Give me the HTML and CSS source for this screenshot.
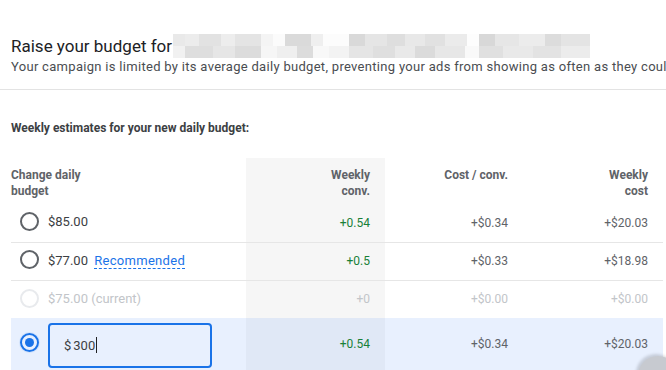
FILE: index.html
```html
<!DOCTYPE html>
<html lang="en">
<head>
  <meta charset="UTF-8" />
  <meta name="viewport" content="width=device-width, initial-scale=1.0" />
  <title>Raise your budget</title>
  <link rel="stylesheet" href="styles.css">
</head>
<body>
  <div class="dialog">
    <div class="dialog-head">
      <div class="title">
        <span>Raise your budget for</span>
        <span class="redacted"></span>
      </div>
      <p class="subtitle">Your campaign is limited by its average daily budget, preventing your ads from showing as often as they could.</p>
    </div>

    <div class="dialog-body">
      <h3 class="section-label">Weekly estimates for your new daily budget:</h3>

      <table class="estimates">
        <thead>
          <tr>
            <th class="col-budget">Change daily<br>budget</th>
            <th class="col-conv">Weekly<br>conv.</th>
            <th class="col-cost">Cost / conv.</th>
            <th class="col-weekly">Weekly<br>cost</th>
          </tr>
        </thead>
        <tbody>
          <tr>
            <td class="col-budget"><span class="radio"></span>$85.00</td>
            <td class="col-conv up">+0.54</td>
            <td class="col-cost">+$0.34</td>
            <td class="col-weekly">+$20.03</td>
          </tr>
          <tr class="divided">
            <td class="col-budget"><span class="radio"></span>$77.00 <span class="recommended">Recommended</span></td>
            <td class="col-conv up">+0.5</td>
            <td class="col-cost">+$0.33</td>
            <td class="col-weekly">+$18.98</td>
          </tr>
          <tr class="divided current">
            <td class="col-budget"><span class="radio"></span>$75.00 (current)</td>
            <td class="col-conv">+0</td>
            <td class="col-cost">+$0.00</td>
            <td class="col-weekly">+$0.00</td>
          </tr>
          <tr class="selected">
            <td class="col-budget"><span class="radio checked"></span><label class="amount-input"><span class="currency">$</span>300<span class="caret"></span></label></td>
            <td class="col-conv up">+0.54</td>
            <td class="col-cost">+$0.34</td>
            <td class="col-weekly">+$20.03</td>
          </tr>
        </tbody>
      </table>
    </div>
  </div>

  <div class="fab-edge"></div>
</body>
</html>
```

FILE: styles.css
```css
* {
  box-sizing: border-box;
  margin: 0;
  padding: 0;
}
body {
  font-family: Roboto, 'Liberation Sans', sans-serif;
  background: #fff;
  color: #3c4043;
  width: 666px;
  height: 370px;
  overflow: hidden;
  position: relative;
}
.dialog-head {
  padding: 34px 0 13px 11px;
  border-bottom: 1px solid #e3e3e3;
}
.title {
  display: flex;
  align-items: center;
  height: 24px;
  font-size: 17px;
  color: #202124;
  white-space: nowrap;
}
.redacted {
  display: inline-block;
  width: 417px;
  height: 24px;
  margin-left: 1px;
  background:
    linear-gradient(to right, #e9e9e9 0 12px, #ececec 12px 26px, #e2e2e2 26px 48px, #ededed 48px 62px, #e4e4e4 62px 88px, #f4f4f4 88px 100px, #fbfbfb 100px 112px, #dadada 112px 138px, #efefef 138px 150px, #fcfcfc 150px 176px, #d9d9d9 176px 192px, #e5e5e5 192px 214px, #dedede 214px 232px, #e8e8e8 232px 252px, #e1e1e1 252px 272px, #ebebeb 272px 294px, #fdfdfd 294px 306px, #d8d8d8 306px 322px, #e6e6e6 322px 346px, #ececec 346px 372px, #dcdcdc 372px 388px, #e4e4e4 388px 417px) top / 100% 12px no-repeat,
    linear-gradient(to right, #f1f1f1 0 12px, #dedede 12px 40px, #e6e6e6 40px 62px, #dcdcdc 62px 88px, #f6f6f6 88px 104px, #efefef 104px 124px, #dcdcdc 124px 140px, #f8f8f8 140px 156px, #f3f3f3 156px 176px, #e5e5e5 176px 200px, #dfdfdf 200px 222px, #e9e9e9 222px 242px, #dbdbdb 242px 262px, #e7e7e7 262px 292px, #f9f9f9 292px 306px, #e0e0e0 306px 330px, #e9e9e9 330px 360px, #e3e3e3 360px 388px, #ececec 388px 417px) bottom / 100% 12px no-repeat;
}
.subtitle {
  font-size: 13px;
  line-height: 18px;
  color: #4a4d51;
  white-space: nowrap;
  letter-spacing: 0.3px;
}
.dialog-body {
  padding: 30px 3px 0 11px;
}
.section-label {
  font-size: 12px;
  line-height: 16px;
  font-weight: 700;
  color: #3c4043;
  margin-bottom: 22px;
}
.estimates {
  border-collapse: collapse;
  table-layout: fixed;
  width: 652px;
  font-size: 12px;
}
.estimates th {
  height: 46px;
  padding: 9px 15px 0 0;
  vertical-align: top;
  text-align: right;
  font-weight: 700;
  line-height: 16px;
  color: #5f6368;
}
.estimates th.col-budget {
  text-align: left;
}
.col-budget { width: 235px; }
.col-conv { width: 139px; background: #f6f6f6; }
.col-cost { width: 138px; }
.col-weekly { width: 140px; }
.estimates td {
  height: 38px;
  padding: 0 15px 0 0;
  text-align: right;
  vertical-align: middle;
  color: #5f6368;
}
.estimates td.col-budget {
  text-align: left;
  padding-left: 9px;
  font-size: 13px;
  color: #3c4043;
  white-space: nowrap;
}
.estimates td.up {
  color: #188038;
}
.divided td {
  border-top: 1px solid #e6e6e6;
}
.radio {
  display: inline-block;
  width: 19px;
  height: 19px;
  border: 2px solid #5f6368;
  border-radius: 50%;
  vertical-align: middle;
  margin: -3px 9px 0 0;
  position: relative;
}
.recommended {
  color: #1a73e8;
  margin-left: 3px;
  border-bottom: 1px dashed #1a73e8;
  letter-spacing: 0.3px;
}
.current td,
.current td.col-budget {
  color: #c2c5c9;
}
.current .radio {
  border-color: #e8eaed;
}
.selected td {
  height: 52px;
  background: #e8f0fe;
}
.selected td.col-conv {
  background: #e0e8f6;
}
.radio.checked {
  border-color: #1a73e8;
  box-shadow: 0 0 0 1px #d2e3fc;
}
.radio.checked::after {
  content: '';
  position: absolute;
  left: 3px;
  top: 3px;
  width: 9px;
  height: 9px;
  border-radius: 50%;
  background: #1a73e8;
}
.amount-input {
  display: inline-flex;
  align-items: center;
  vertical-align: middle;
  width: 164px;
  height: 45px;
  margin-top: 2px;
  padding-left: 14px;
  border: 2px solid #1a73e8;
  border-radius: 4px;
  background: #e8f0fe;
  font-size: 13px;
  color: #3c4043;
}
.currency {
  margin-right: 2px;
}
.caret {
  display: inline-block;
  width: 1px;
  height: 16px;
  background: #202124;
  margin-left: 1px;
}
.fab-edge {
  position: absolute;
  right: -12px;
  bottom: -26px;
  width: 40px;
  height: 40px;
  border-radius: 50%;
  background: #c7cad0;
  box-shadow: -2px -2px 3px rgba(0, 0, 0, 0.15);
}
```
